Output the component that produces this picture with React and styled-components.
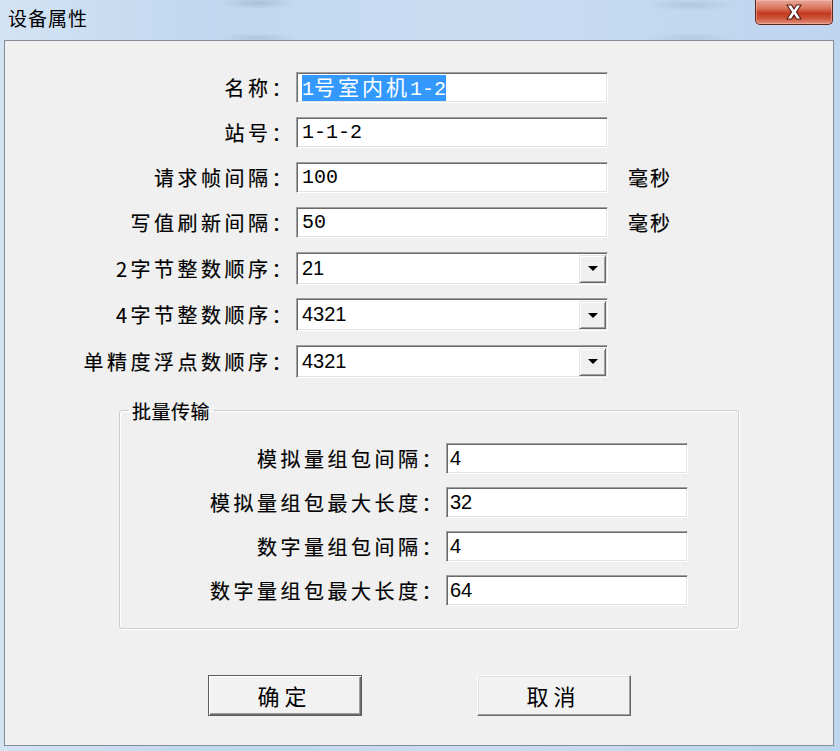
import React from "react"
import styled, { createGlobalStyle, css } from "styled-components"

const GlobalStyle = createGlobalStyle`
  html, body {
    margin: 0;
    padding: 0;
  }
  body {
    width: 840px;
    height: 751px;
    overflow: hidden;
    background: #c4d9ef;
  }
`

const Window = styled.div`
  width: 840px;
  height: 751px;
  display: flex;
  flex-direction: column;
  background: linear-gradient(90deg, #d3e3f4 0%, #c0d7ef 25%, #c9ddf2 55%, #bed5ee 100%);
  font-family: "Noto Sans CJK SC", "Liberation Sans", sans-serif;
  color: #000;
`

const TitleBar = styled.div`
  height: 40px;
  flex-shrink: 0;
  display: flex;
  justify-content: space-between;
  align-items: flex-start;
  background:
    radial-gradient(ellipse 38px 6px at 258px 3px, rgba(110, 128, 150, 0.28), transparent),
    radial-gradient(ellipse 38px 5px at 258px 38px, rgba(110, 128, 150, 0.22), transparent),
    radial-gradient(ellipse 45px 6px at 690px 5px, rgba(110, 128, 150, 0.2), transparent),
    radial-gradient(ellipse 45px 5px at 690px 38px, rgba(110, 128, 150, 0.16), transparent);
`

const Caption = styled.div`
  margin: 6px 0 0 8px;
  font-size: 19px;
  line-height: 24px;
  letter-spacing: 1px;
`

const CloseButton = styled.div`
  width: 78px;
  height: 25px;
  margin-right: 7px;
  box-sizing: border-box;
  border: 1px solid #5e2720;
  border-top: none;
  border-radius: 0 0 5px 5px;
  background: linear-gradient(180deg, #e9a999 0%, #d9725a 35%, #c43a22 55%, #cc5238 75%, #e2907a 100%);
  box-shadow: inset 0 0 0 1px rgba(255, 200, 190, 0.45);
  display: flex;
  align-items: center;
  justify-content: center;
`

const Client = styled.div`
  flex: 1;
  margin: 0 6px 5px 4px;
  border: 1px solid #858d96;
  background: #f0f0f0;
  padding-top: 24px;
  display: flex;
  flex-direction: column;
`

const Row = styled.div`
  height: ${p => p.$h}px;
  display: flex;
  align-items: center;
`

const Label = styled.div`
  width: ${p => p.$w}px;
  flex-shrink: 0;
  text-align: right;
  font-size: 20px;
  letter-spacing: 3.5px;
  -webkit-text-stroke: 0.18px #000;
  white-space: nowrap;
  margin-right: 1px;
`

const Field = styled.div`
  width: ${p => p.$w}px;
  height: ${p => p.$h || 31}px;
  box-sizing: border-box;
  background: #fff;
  border-top: 1px solid #a0a0a0;
  border-left: 1px solid #a0a0a0;
  border-right: 1px solid #fff;
  border-bottom: 1px solid #fff;
  box-shadow: inset 1px 1px 0 #696969, inset -1px -1px 0 #e3e3e3;
  display: flex;
  align-items: center;
  padding-left: ${p => (p.$narrow ? 3 : 5)}px;
  font-family: ${p => (p.$sans ? `"Liberation Sans", sans-serif` : `"Liberation Mono", "Noto Sans CJK SC", monospace`)};
  font-size: 20px;
  white-space: nowrap;
`

const Wide = styled.span`
  font-family: "Noto Sans CJK SC", sans-serif;
  font-size: 21px;
  letter-spacing: 3px;
`

const Selected = styled.span`
  background: #3399ff;
  color: #fff;
  line-height: 23px;
`

const Unit = styled.div`
  margin-left: 20px;
  font-size: 20px;
  letter-spacing: 2px;
  -webkit-text-stroke: 0.18px #000;
`

const ArrowButton = styled.div`
  width: 27px;
  align-self: stretch;
  margin: 2px 1px 1px auto;
  box-sizing: border-box;
  background: #f0f0f0;
  border-top: 1px solid #e3e3e3;
  border-left: 1px solid #e3e3e3;
  border-right: 1px solid #696969;
  border-bottom: 1px solid #696969;
  box-shadow: inset 1px 1px 0 #fff, inset -1px -1px 0 #a0a0a0;
  display: flex;
  align-items: center;
  justify-content: center;

  &::after {
    content: "";
    border-left: 5px solid transparent;
    border-right: 5px solid transparent;
    border-top: 5px solid #000;
  }
`

const Group = styled.fieldset`
  margin: 14px 0 0 114px;
  width: 620px;
  box-sizing: border-box;
  padding: 14px 0 15px 0;
  border: 1px solid #c9cdd1;
  border-radius: 3px;
  box-shadow: inset 1px 1px 0 #fff, 1px 1px 0 #fff;
`

const Legend = styled.legend`
  margin-left: 8px;
  padding: 0 4px;
  font-size: 19px;
  line-height: 24px;
  letter-spacing: 0.5px;
  -webkit-text-stroke: 0.18px #000;
`

const Buttons = styled.div`
  margin-top: 46px;
  display: flex;
  justify-content: center;
  gap: 115px;
`

const Button = styled.div`
  width: 154px;
  height: 41px;
  box-sizing: border-box;
  display: flex;
  align-items: center;
  justify-content: center;
  background: #f2f2f2;
  font-size: 22px;
  letter-spacing: 5px;
  border-top: 1px solid #fff;
  border-left: 1px solid #fff;
  border-right: 1px solid #696969;
  border-bottom: 1px solid #696969;
  box-shadow: inset -1px -1px 0 #a0a0a0, inset 1px 1px 0 #e3e3e3;

  ${p =>
    p.$default &&
    css`
      border: 1px solid #5d5d5d;
      box-shadow: inset 1px 1px 0 #fff, inset -1px -1px 0 #696969, inset -2px -2px 0 #a0a0a0;
    `}
`

const fields = [
  { label: "名称：", value: "1号室内机1-2", selected: true },
  { label: "站号：", value: "1-1-2" },
  { label: "请求帧间隔：", value: "100", unit: "毫秒" },
  { label: "写值刷新间隔：", value: "50", unit: "毫秒" },
]

const combos = [
  { label: "2字节整数顺序：", value: "21" },
  { label: "4字节整数顺序：", value: "4321" },
  { label: "单精度浮点数顺序：", value: "4321" },
]

const batch = [
  { label: "模拟量组包间隔：", value: "4" },
  { label: "模拟量组包最大长度：", value: "32" },
  { label: "数字量组包间隔：", value: "4" },
  { label: "数字量组包最大长度：", value: "64" },
]

const CloseIcon = () => (
  <svg width="18" height="16" viewBox="0 0 18 16">
    <path
      d="M2 1h4.5L9 5l2.5-4H16l-4.5 7 4.5 7h-4.5L9 11l-2.5 4H2l4.5-7z"
      fill="#fff"
      stroke="#5a1f16"
      strokeWidth="1.2"
      strokeLinejoin="round"
    />
  </svg>
)

// CJK runs get a wider face, like the dialog's font
const renderMixed = text =>
  text.split(/([\u4e00-\u9fff]+)/).map((part, i) =>
    /[\u4e00-\u9fff]/.test(part) ? <Wide key={i}>{part}</Wide> : part
  )

export default function App() {
  return (
    <>
      <GlobalStyle />
      <Window>
        <TitleBar>
          <Caption>设备属性</Caption>
          <CloseButton>
            <CloseIcon />
          </CloseButton>
        </TitleBar>
        <Client>
          {fields.map(f => (
            <Row key={f.label} $h={45}>
              <Label $w={290}>{f.label}</Label>
              <Field $w={312}>
                {f.selected ? <Selected>{renderMixed(f.value)}</Selected> : f.value}
              </Field>
              {f.unit && <Unit>{f.unit}</Unit>}
            </Row>
          ))}
          {combos.map(c => (
            <Row key={c.label} $h={46.5}>
              <Label $w={290}>{c.label}</Label>
              <Field $w={312} $h={33} $sans>
                {c.value}
                <ArrowButton />
              </Field>
            </Row>
          ))}
          <Group>
            <Legend>批量传输</Legend>
            {batch.map(b => (
              <Row key={b.label} $h={44}>
                <Label $w={325}>{b.label}</Label>
                <Field $w={242} $sans $narrow>
                  {b.value}
                </Field>
              </Row>
            ))}
          </Group>
          <Buttons>
            <Button $default>确定</Button>
            <Button>取消</Button>
          </Buttons>
        </Client>
      </Window>
    </>
  )
}
